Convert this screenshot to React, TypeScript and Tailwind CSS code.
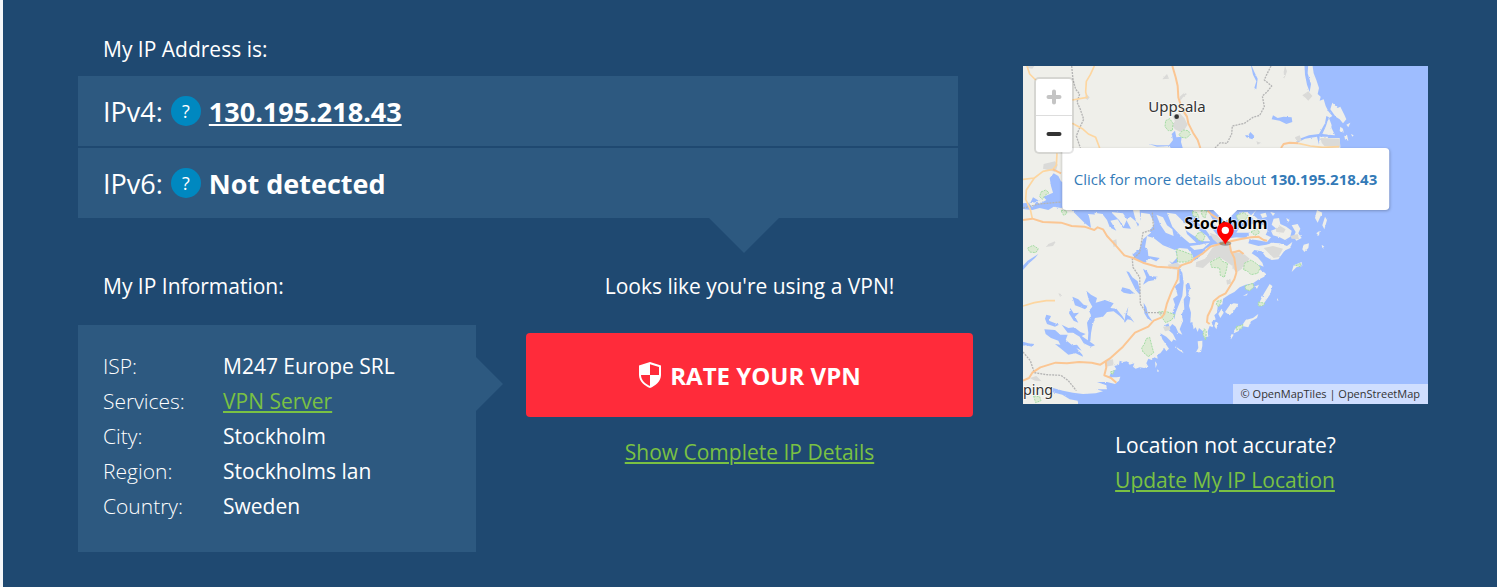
import { useState } from "react";
import type { ReactNode } from "react";

const IP = "130.195.218.43";

const info = [
  { label: "ISP:", value: "M247 Europe SRL" },
  { label: "Services:", value: "VPN Server", href: "#services" },
  { label: "City:", value: "Stockholm" },
  { label: "Region:", value: "Stockholms lan" },
  { label: "Country:", value: "Sweden" },
];

const MAINLAND =
  "M-20 -20H866L872 22L880 42L888 66L884 84L893 92L890 104L902 100L908 120L916 136L928 150L918 156L926 178L922 198L914 216L950 216L952 246L900 300L760 400L700 432L690 446L704 458L694 468L722 478L734 494L728 506L744 514L732 528L700 522L680 520L676 532L706 540L730 536L752 530L774 542L790 548L780 560L766 580L746 582L728 572L716 556L694 552L686 562L704 574L718 590L722 602L708 596L712 612L728 622L724 632L704 642L690 652L668 656L650 664L634 678L618 686L600 698L598 714L584 722L582 740L574 748L578 760L566 768L570 784L560 780L554 796L556 812L544 812L540 796L528 786L524 798L518 784L512 790L508 768L502 770L504 740L498 720L502 696L496 682L502 664L498 650L488 656L490 688L482 700L484 730L476 744L480 764L470 790L478 806L466 800L458 782L448 774L440 784L436 772L426 778L434 790L450 804L460 824L452 820L446 828L430 812L412 802L418 820L438 848L430 856L424 846L412 862L402 866L404 878L394 874L386 882L376 878L370 892L376 902L364 906L350 904L338 908L330 902L334 892L320 896L312 886L300 888L290 884L288 896L274 900L280 910L266 916L258 934L280 934L292 932L288 944L276 954L252 948L222 948L250 958L252 970L220 970L240 976L218 982L180 984L150 980L120 974L90 966L86 978L118 986L140 1000L164 1004L168 1034H-20Z";

const LAKES = [
  "M80 336L92 322L106 330L114 346L140 360V420L114 426L92 422L76 432L50 426L28 432L-10 428V412L22 410L30 394L48 404L62 392L90 380L84 360Z",
  "M150 400L146 432L160 446L184 470L204 486L200 460L196 444L222 446L240 458L252 480L280 494L262 464L284 460L300 486L324 488L310 462L322 452L348 474L350 494L340 470L330 432V400Z",
  "M350 432V400H510V432L516 452L530 458L522 468L544 486L560 508L582 516L596 524L590 534L568 536L548 548L530 572L514 584L508 566L494 548L470 546L456 552L470 562L466 588L448 596L430 574L398 558L372 534L376 570L410 576L400 586L378 576L366 592L344 584L328 566L350 548L360 520L382 502L372 476L352 462Z",
  "M546 432V400H700V432L682 450L700 468L680 478L650 484L640 500L682 500L668 516L640 514L600 520L580 504L566 486L576 470L562 456Z",
  "M310 616L318 618L328 634L344 646L352 676L350 686L338 672L326 648Z",
  "M298 664L320 670L334 682L322 684L302 680L294 674Z",
  "M360 608L372 616L380 630L404 632L396 642L376 646L360 656L370 634Z",
  "M468 606L478 620L482 650L478 690L466 720L458 740L454 760L448 742L456 716L450 698L464 688L456 660L470 650Z",
  "M362 710L370 724L376 748L388 766L374 758L364 742Z",
  "M316 722L312 746L322 752L334 770L324 762L314 760L304 770L308 742Z",
  "M190 674L204 686L222 696L218 710L246 702L272 712L262 726L280 728L298 750L310 770L290 750L272 736L252 738L240 752L216 756L208 780L204 802L202 826L194 830L196 800L192 770L204 748L198 734L208 722L198 704Z",
  "M148 692L166 700L182 716L196 720L186 730L172 724L156 718Z",
  "M142 726L152 742L168 740L156 752L166 770L152 764L138 742Z",
  "M70 746L84 750L78 764L108 776L96 782L72 774L66 758Z",
  "M64 790L96 792L112 806L134 806L128 822L148 838L162 836L176 854L160 846L178 866L180 872L158 862L136 866L116 850L96 834L112 836L106 824L84 816L68 804Z",
  "M116 776L136 786L154 784L172 798L188 804L176 810L190 820L216 838L204 842L182 832L170 812L150 800L134 800Z",
  "M-10 824L16 832L34 834L28 842L8 838L-10 840Z",
  "M-10 610L14 584L46 564L36 576L18 592L0 612Z",
  "M378 234L402 238L438 238L450 222L446 204L456 194L460 214L476 212L474 228L482 256H448L440 240L402 242Z",
  "M750 148L764 156L782 152L806 154L808 168L790 174L770 164L746 160Z",
  "M682 198L694 210L688 220L670 214L666 208L676 208Z",
  "M682 -10L694 18L704 38L700 70L694 66L700 46L690 26Z",
  "M844 -10H856L854 22L864 54L860 78L852 56L846 26Z",
  "M820 222L858 208L888 204L906 172L910 150L918 154L908 182L898 204L920 206L944 212L890 212L888 236L882 212L846 218L822 230Z",
];

const ISLANDS = [
  "M928 110L944 126L952 122L964 146L970 160L960 172L950 160L938 152L922 130Z",
  "M914 164L924 182L936 208L914 206Z",
  "M952 182L960 188L962 200L950 194Z M970 176L982 170L976 184Z M964 210L972 206L976 224L966 220Z M984 204L992 208L988 212Z",
  "M42 406L62 394L70 402L48 414Z M18 412L40 408L28 424Z",
  "M214 440L238 444L252 462L262 488L236 484L222 464Z M264 438L300 442L312 460L302 482L288 462Z",
  "M354 440L380 444L394 472L380 496L360 504L340 488L352 468Z",
  "M400 446L420 454L432 478L448 490L452 510L428 500L412 476Z",
  "M432 440L458 444L480 466L492 504L520 530L500 532L474 510L448 482Z",
  "M372 510L392 516L420 538L456 552L464 574L448 590L420 576L390 562L366 544Z",
  "M480 470L506 476L530 494L552 510L562 526L538 526L510 508L490 494Z",
  "M500 540L530 536L560 530L540 548L514 552Z",
  "M510 436L556 436L568 460L590 470L600 486L572 478L544 468L520 452Z",
  "M650 440L672 438L690 452L672 462L648 460Z",
  "M752 458L768 456L772 474L790 482L806 494L802 512L786 522L770 514L750 508L744 494L760 488L746 476Z",
  "M806 478L824 474L832 488L826 502L836 516L820 524L812 512L818 498Z",
  "M712 444L728 440L732 452L718 456Z M742 438L756 442L750 450Z M790 456L800 462L794 470Z",
  "M744 530L770 532L792 540L808 528L802 546L780 556L770 572L752 576L744 560L726 548Z",
  "M842 536L858 532L856 546L844 558L838 550Z",
  "M882 432L898 440L892 452L884 470L876 456Z M906 452L912 462L904 490L898 478Z M880 502L890 494L888 510Z M896 536L904 542L898 546Z",
  "M740 654L748 660L742 684L728 704L720 716L710 708L722 684Z",
  "M812 598L836 588L838 600L820 604L806 618Z",
  "M620 718L632 712L648 714L640 724L630 738L620 748L606 738Z",
  "M636 788L656 780L668 762L690 756L706 744L702 756L684 766L676 784L656 780L646 796L632 802Z",
  "M626 804L632 806L624 820L622 814Z",
  "M524 826L538 824L538 840L534 858L518 860L526 846Z",
  "M596 728L602 740L592 756L586 744Z M578 766L586 772L580 790L574 780Z",
  "M396 886L402 894L398 906Z M402 910L408 914L404 920Z M456 840L478 856L482 862L466 852Z",
  "M764 696L766 706L762 702Z M660 690L674 682L672 688Z M694 662L708 656L702 668Z",
];

const TOWNS = [
  "M448 150L470 142L484 156L494 176L486 188L472 198L456 190L446 176L456 166Z",
  "M470 92L484 80L492 84L480 94L472 104Z M424 32L432 24L438 38L418 40Z",
  "M62 294L96 286L104 296L98 318L76 312L60 308Z",
  "M568 546L594 530L620 536L628 560L640 574L628 600L612 588L590 574L562 586L540 606L518 602L520 588L546 578Z",
  "M624 556L660 562L680 578L668 600L640 620L628 604L632 580Z",
  "M434 596L462 590L478 600L466 612L440 608Z",
  "M420 782L440 780L442 792L426 796Z M246 884L270 880L272 898L248 902Z",
  "M722 546L750 540L780 548L766 574L752 576L736 560Z",
  "M758 486L772 480L788 490L782 500L760 498Z M802 510L824 504L828 520L806 518Z",
  "M892 216L950 218L952 244L904 240L896 230Z M816 214L830 208L836 224L820 228Z",
  "M42 546L46 554L40 558Z M610 642L622 638L624 652L612 656Z M106 682L114 684L112 694Z",
  "M268 524L280 520L282 536L272 544Z M76 534L100 524L90 540L70 542Z",
  "M838 88L856 76L868 90L856 104L848 96Z M190 84L200 94L194 102L186 96Z",
  "M10 0H34L28 8L14 6Z M20 936L40 930L56 946L36 944Z M700 226L714 230L704 236Z",
  "M560 500L582 508L596 524L584 532L570 520Z M786 0L792 16L784 38L782 18Z",
];

const PARKS = [
  "M428 164L440 158L450 172L448 194L436 194L426 182Z",
  "M468 206L480 192L496 194L502 206L490 216L476 214Z",
  "M460 550L480 556L506 566L508 580L490 588L464 588Z",
  "M524 502L536 498L546 510L540 526L526 522L518 512Z",
  "M562 588L590 574L598 586L614 592L610 612L604 634L592 628L590 606L566 604Z",
  "M664 592L684 582L702 594L712 604L704 622L684 626L672 614L662 612Z",
  "M640 448L662 440L676 450L664 464L644 462Z",
  "M534 434H552L546 456L538 450Z M508 436L522 440L528 454L510 450Z",
  "M370 818L380 814L386 838L392 860L376 872L360 858L356 846L364 834Z",
  "M406 738L428 736L456 746L446 762L428 770L418 756Z",
  "M14 546L30 538L46 548L38 560L20 558Z",
  "M54 378L68 372L78 380L66 388L58 400L50 392Z M114 434L128 432L132 442L122 448Z",
  "M666 660L690 652L692 664L680 674L668 670Z",
  "M706 708L726 712L718 720L706 720Z M640 782L660 776L656 788L640 792Z",
  "M32 990L50 992L54 1004L38 1010Z M582 706L596 702L588 722L580 716Z M544 788L550 796L548 822L540 806Z",
  "M684 498L702 488L710 500L696 508Z M818 598L834 592L832 602Z M262 918L274 914L268 926Z",
];

const ROADS = [
  "M448 0L458 34L464 60L466 94L474 120L484 140L492 152L496 172L510 200L524 222L532 246",
  "M90 310L114 322",
  "M0 462L28 458L60 468L114 470L146 480L184 482L214 492L224 484L240 490L252 510L276 536L304 568L330 576L360 590L402 602L464 606",
  "M464 610L474 598L504 588L516 576L540 562L562 542L590 534L614 528L650 520L684 514L706 512L722 522L732 524",
  "M466 612L464 640L446 676L432 712L424 744L416 754L392 764L376 782L336 800L300 842L260 878L232 896L206 890L168 888L132 892L98 890L52 904L28 920L18 936L0 944",
  "M620 534L624 556L634 576L640 620L634 640L608 682L588 692L572 706L566 726L554 750L552 768L560 774",
  "M248 884L250 904L244 928L264 936L280 950",
  "M774 246L782 234L800 230L826 232",
  "M554 434L566 446L592 462",
  "M626 560L648 554L662 564",
];

const MINOR_ROADS = [
  "M214 0L202 26L190 46L188 78L192 94L148 102",
  "M12 0L20 24L38 42",
  "M148 172L178 188L196 204L218 214L230 246",
  "M102 262L100 298L90 310L60 316L34 336L0 340",
  "M34 336L10 372L8 400L22 430L28 458",
  "M0 720L34 710L70 704L96 704",
  "M826 232L862 240L900 244L948 242",
];

const BORDERS = [
  "M146 0L150 40L158 70L170 84L162 108L172 130L182 160L168 190L160 210L172 246",
  "M744 0L730 28L724 42L746 60L732 78L718 90L724 122L710 148L690 154L664 172L628 180L626 204L612 232L592 230L576 246",
  "M388 440L392 490L360 500L350 560L328 580L330 604L350 634L352 714L370 740L404 740L424 742",
  "M0 858L22 884L34 920L70 926L114 928L136 944L160 974",
  "M0 426L48 414L114 408",
];

function Areas({ shapes, fill }: { shapes: string[]; fill: string }) {
  return (
    <>
      {shapes.map((d) => (
        <path key={d} d={d} fill={fill} />
      ))}
    </>
  );
}

function Lines({ shapes, stroke, width, dash }: { shapes: string[]; stroke: string; width: number; dash?: string }) {
  return (
    <>
      {shapes.map((d) => (
        <path
          key={d}
          d={d}
          fill="none"
          stroke={stroke}
          strokeWidth={width}
          strokeDasharray={dash}
          strokeLinejoin="round"
        />
      ))}
    </>
  );
}

function MapDrawing() {
  return (
    <svg viewBox="0 0 1215 1014" className="block w-full" role="img" aria-label="Map">
      <defs>
        {/* roughens the shorelines */}
        <filter id="shore" x="0" y="0" width="1" height="1">
          <feTurbulence type="fractalNoise" baseFrequency="0.16" numOctaves="2" seed="4" />
          <feDisplacementMap in="SourceGraphic" scale="6" xChannelSelector="R" yChannelSelector="G" />
        </filter>
      </defs>
      <rect width="1215" height="1014" fill="#9ebdff" />
      <g filter="url(#shore)">
        <path d={MAINLAND} fill="#efefea" />
        <Areas shapes={LAKES} fill="#9ebdff" />
        <Areas shapes={ISLANDS} fill="#efefea" />
        <Areas shapes={TOWNS} fill="#dadad8" />
      </g>
      {PARKS.map((d) => (
        <path key={d} d={d} fill="#dcead3" stroke="#a5dda5" strokeWidth="3" strokeDasharray="6 3" />
      ))}
      <Lines shapes={BORDERS} stroke="#b5b5b5" width={4} dash="6 3" />
      <Lines shapes={MINOR_ROADS} stroke="#fdd6a0" width={5} />
      <Lines shapes={ROADS} stroke="#fbc693" width={6} />
      <circle cx="461" cy="152" r="7" fill="#333" />
      <g
        fontFamily="'Noto Sans', sans-serif"
        stroke="#fff"
        strokeOpacity="0.7"
        strokeWidth="5"
        paintOrder="stroke"
      >
        <text x="462" y="138" fontSize="45" fill="#333" textAnchor="middle">
          Uppsala
        </text>
        <text x="609" y="490" fontSize="47" fontWeight="700" fill="#000" textAnchor="middle">
          Stockholm
        </text>
        <text x="0" y="986" fontSize="43" fill="#333">
          ping
        </text>
      </g>
      <ellipse cx="607" cy="532" rx="18" ry="7" fill="#000" fillOpacity="0.3" />
      <path
        d="M607 468C593 468 582 479 582 493C582 511 599 519 607 536C615 519 632 511 632 493C632 479 621 468 607 468Z"
        fill="#f00"
      />
      <circle cx="607" cy="493" r="11" fill="#fff" />
    </svg>
  );
}

function LocationMap() {
  const [zoom, setZoom] = useState(8);

  return (
    <div className="relative overflow-hidden">
      <MapDrawing />
      <a
        href="#details"
        className="absolute top-[82px] left-1/2 -translate-x-1/2 rounded-[4px] bg-white px-3 py-5 text-[15px] leading-[22px] whitespace-nowrap text-[#337ab7] shadow-[0_1px_3px_rgba(0,0,0,0.25)]"
      >
        Click for more details about <b>{IP}</b>
        <span className="absolute top-full left-1/2 -ml-[12px] border-x-[12px] border-t-[12px] border-x-transparent border-t-white" />
      </a>
      <div
        className="absolute top-[13px] left-[13px] flex w-9 flex-col rounded-[3px] bg-white ring-2 ring-black/10"
        data-zoom={zoom}
      >
        <button
          aria-label="Zoom in"
          onClick={() => setZoom(zoom + 1)}
          className="flex h-[37px] items-center justify-center border-b border-[#ddd] text-[#c4c4c4]"
        >
          <svg viewBox="0 0 16 16" className="size-4" stroke="currentColor" strokeWidth="4" strokeLinecap="round">
            <path d="M8 2.500V13.500M2.500 8H13.500" />
          </svg>
        </button>
        <button
          aria-label="Zoom out"
          onClick={() => setZoom(zoom - 1)}
          className="flex h-9 items-center justify-center text-[#333]"
        >
          <svg viewBox="0 0 16 16" className="size-4" stroke="currentColor" strokeWidth="4" strokeLinecap="round">
            <path d="M2.500 8H13.500" />
          </svg>
        </button>
      </div>
      <div className="absolute right-0 bottom-0 bg-white/50 px-2 text-[11px] leading-5 text-[#333]">
        © <a href="#omt">OpenMapTiles</a> | <a href="#osm">OpenStreetMap</a>
      </div>
    </div>
  );
}

function AddressRow({ label, children }: { label: string; children: ReactNode }) {
  return (
    <div className="flex h-[70px] items-center bg-[#2d5980] px-[25px] text-[27px]">
      <span>{label}</span>
      <button
        aria-label={`About ${label}`}
        className="mx-2 flex size-[30px] items-center justify-center rounded-full bg-[#0088c0] text-[18px]"
      >
        ?
      </button>
      {children}
    </div>
  );
}

function ShieldIcon() {
  return (
    <svg viewBox="0 0 24 28" className="h-[28px] w-6" fill="currentColor">
      <path
        fillRule="evenodd"
        d="M12 1L23 4.500V14C23 20.500 17 25 12 27C7 25 1 20.500 1 14V4.500ZM12 3.200V14H3C3 19.500 8 23.200 12 25V14H21V6Z"
      />
    </svg>
  );
}

export default function App() {
  return (
    <div className="min-h-screen border-l-[3px] border-[#f5f7f9] bg-[#1f4971] font-['Open_Sans',sans-serif] text-[21px] leading-[35px] text-white">
      <main className="grid grid-cols-[895fr_405fr] gap-[50px] pr-[69px] pb-[35px] pl-[75px]">
        <section className="pt-8">
          <h2 className="mb-[9px] pl-[25px]">My IP Address is:</h2>
          <div className="relative mr-[15px] flex flex-col gap-[2px]">
            <AddressRow label="IPv4:">
              <a href="#ip" className="font-bold underline decoration-2 underline-offset-2">
                {IP}
              </a>
            </AddressRow>
            <AddressRow label="IPv6:">
              <b>Not detected</b>
            </AddressRow>
            <span className="absolute top-full right-[179px] border-x-[35px] border-t-[35px] border-x-transparent border-t-[#2d5980]" />
          </div>
          <div className="mt-[51px] grid grid-cols-[398fr_447fr] gap-[50px]">
            <div>
              <h2 className="mb-[21px] pl-[25px]">My IP Information:</h2>
              <div className="relative bg-[#2d5980] px-[25px] pt-6 pb-7">
                <table className="w-full text-left">
                  <tbody>
                    {info.map((row) => (
                      <tr key={row.label}>
                        <th className="w-[120px] p-0 font-light">{row.label}</th>
                        <td className="p-0">
                          {row.href ? (
                            <a href={row.href} className="text-[#7ac143] underline">
                              {row.value}
                            </a>
                          ) : (
                            row.value
                          )}
                        </td>
                      </tr>
                    ))}
                  </tbody>
                </table>
                <span className="absolute top-8 left-full border-y-[27px] border-l-[27px] border-y-transparent border-l-[#2d5980]" />
              </div>
            </div>
            <div className="text-center">
              <p className="mb-[21px]">Looks like you're using a VPN!</p>
              <button className="mt-[29px] mb-[18px] flex h-[84px] w-full items-center justify-center gap-2 rounded-[4px] bg-[#ff2b3a] text-[24px] font-bold">
                <ShieldIcon />
                RATE YOUR VPN
              </button>
              <a href="#complete" className="text-[#7ac143] underline">
                Show Complete IP Details
              </a>
            </div>
          </div>
        </section>
        <aside className="pt-[66px]">
          <LocationMap />
          <div className="mx-auto mt-6 w-fit">
            <p>Location not accurate?</p>
            <a href="#update" className="text-[#7ac143] underline">
              Update My IP Location
            </a>
          </div>
        </aside>
      </main>
    </div>
  );
}
